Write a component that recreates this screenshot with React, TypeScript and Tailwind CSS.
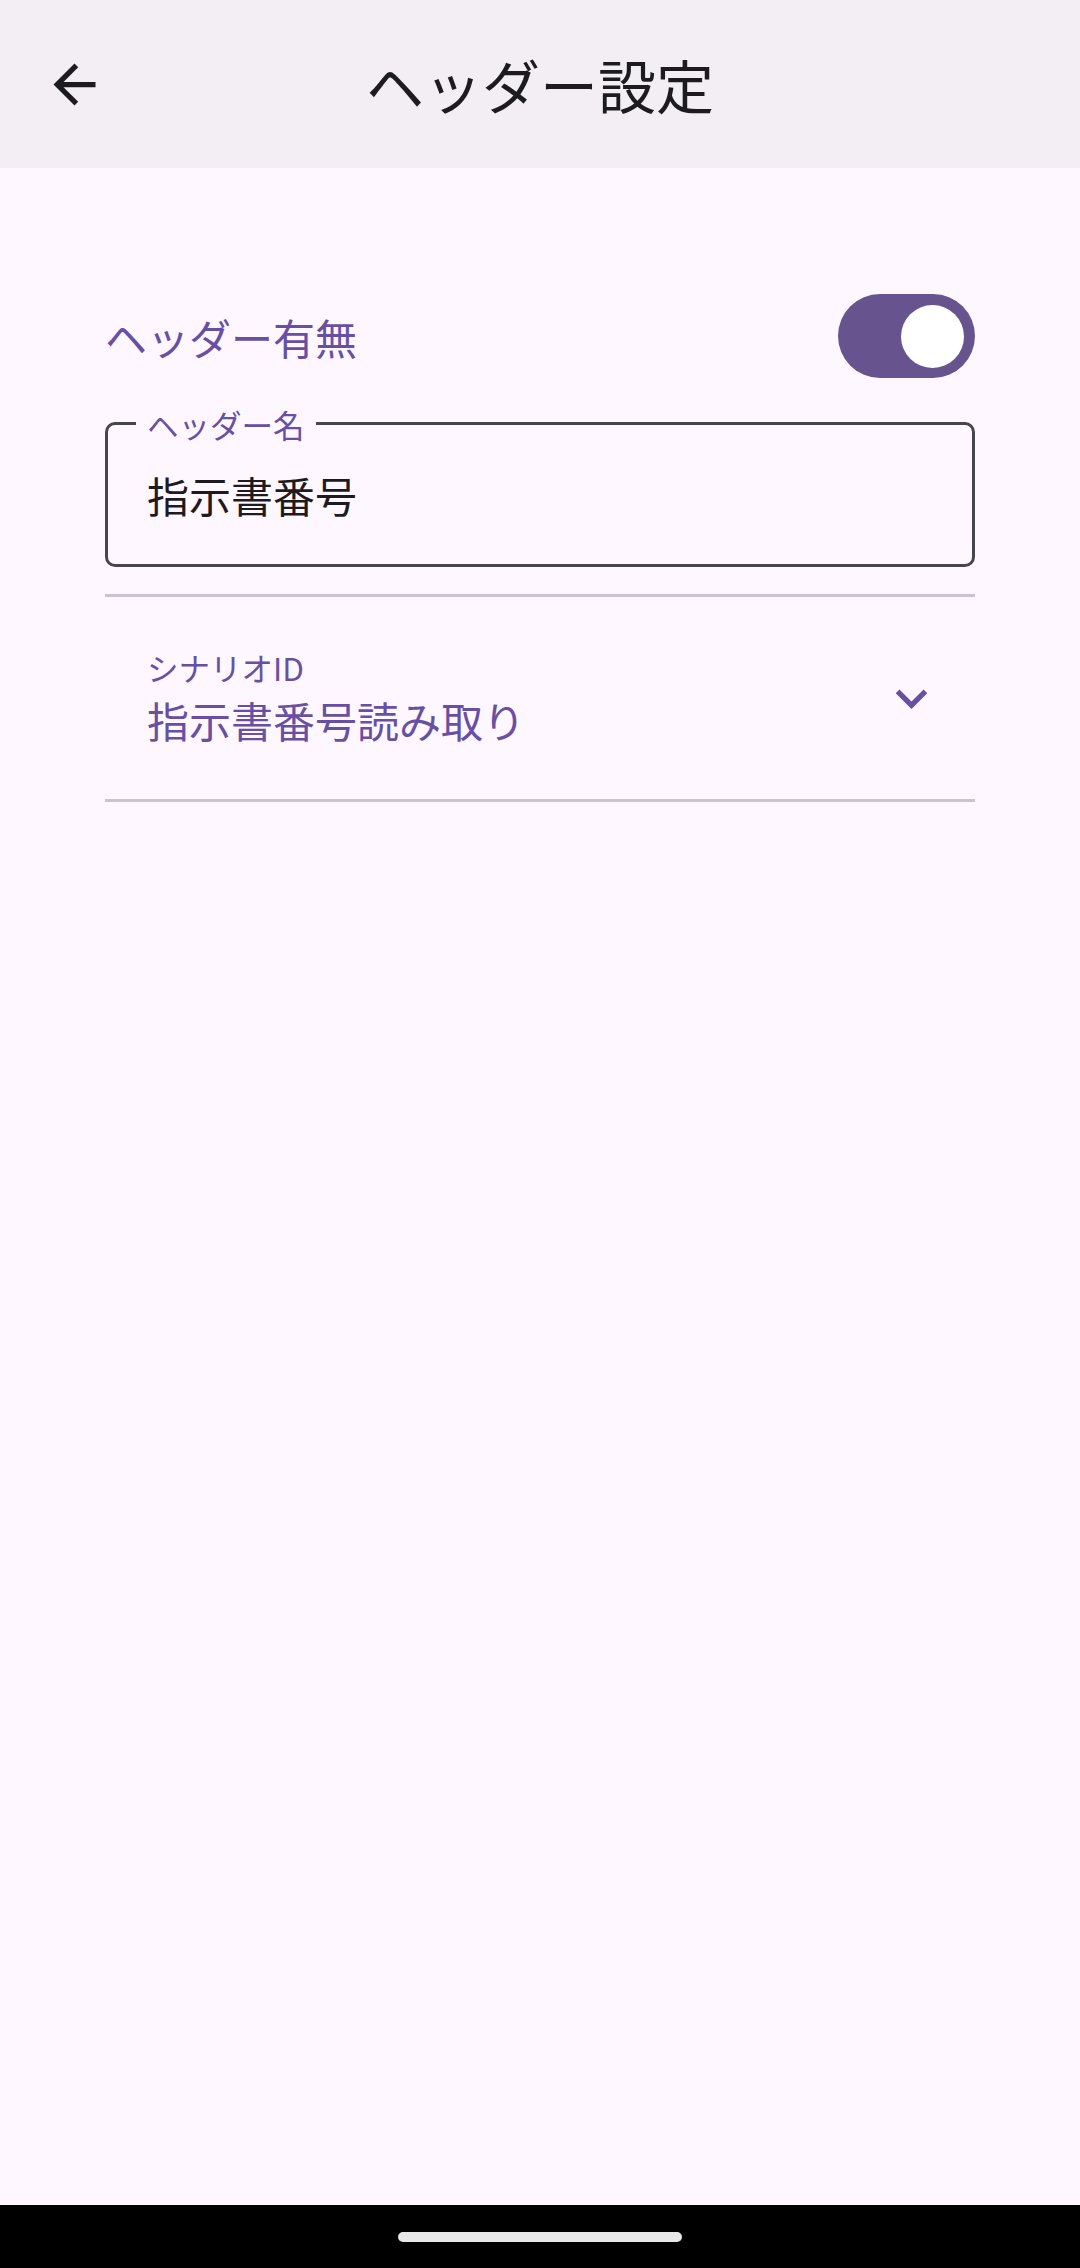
import React from "react"

const font = { fontFamily: '"Noto Sans CJK JP", "Noto Sans", sans-serif' }

function BackArrow() {
  return (
    <svg viewBox="0 0 24 24" className="h-[63px] w-[63px]" fill="#1d1b20">
      <path d="M20 11H7.83l5.59-5.59L12 4l-8 8 8 8 1.41-1.41L7.83 13H20v-2z" />
    </svg>
  )
}

function ExpandMore() {
  return (
    <svg viewBox="0 0 24 24" className="h-[63px] w-[63px]" fill="#6750a4">
      <path d="M16.59 8.59L12 13.17 7.41 8.59 6 10l6 6 6-6z" />
    </svg>
  )
}

export default function App() {
  return (
    <div className="flex h-[2268px] w-[1080px] flex-col bg-[#fef7ff]" style={font}>
      {/* Top app bar */}
      <header className="grid h-[168px] shrink-0 grid-cols-[1fr_auto_1fr] items-center bg-[#f2eef4]">
        <div className="pl-[43px]">
          <BackArrow />
        </div>
        <h1 className="text-[58px] leading-[84px] font-normal text-[#1d1b20]">ヘッダー設定</h1>
        <div />
      </header>

      {/* Content */}
      <main className="flex flex-1 flex-col px-[105px] pt-[126px]">
        <div className="flex h-[84px] items-center justify-between">
          <span className="text-[42px] leading-[63px] text-[#6750a4]">ヘッダー有無</span>
          <div className="flex h-[84px] w-[137px] items-center justify-end rounded-full bg-[#67548e] pr-[11px]">
            <div className="h-[63px] w-[63px] rounded-full bg-white" />
          </div>
        </div>

        <div className="relative mt-[44px] flex h-[145px] items-center rounded-[10px] border-[3px] border-[#49454f] pl-[39px]">
          <span className="absolute left-[28px] top-[-22px] bg-[#fef7ff] px-[11px] text-[31.5px] leading-[42px] text-[#6750a4]">
            ヘッダー名
          </span>
          <span className="text-[42px] leading-[63px] text-[#1d1b20]">指示書番号</span>
        </div>

        <div className="mt-[27px] h-[3px] bg-[#cac4d0]" />

        <div className="flex h-[202px] items-center justify-between pl-[42px] pr-[32px]">
          <div className="flex flex-col">
            <span className="text-[31.5px] leading-[42px] text-[#6750a4]">シナリオID</span>
            <span className="text-[42px] leading-[63px] text-[#6750a4]">指示書番号読み取り</span>
          </div>
          <ExpandMore />
        </div>

        <div className="h-[3px] bg-[#cac4d0]" />
      </main>

      {/* System navigation bar */}
      <footer className="flex h-[63px] shrink-0 items-center justify-center bg-black">
        <div className="h-[10px] w-[284px] rounded-full bg-[#e8e8e8]" />
      </footer>
    </div>
  )
}
